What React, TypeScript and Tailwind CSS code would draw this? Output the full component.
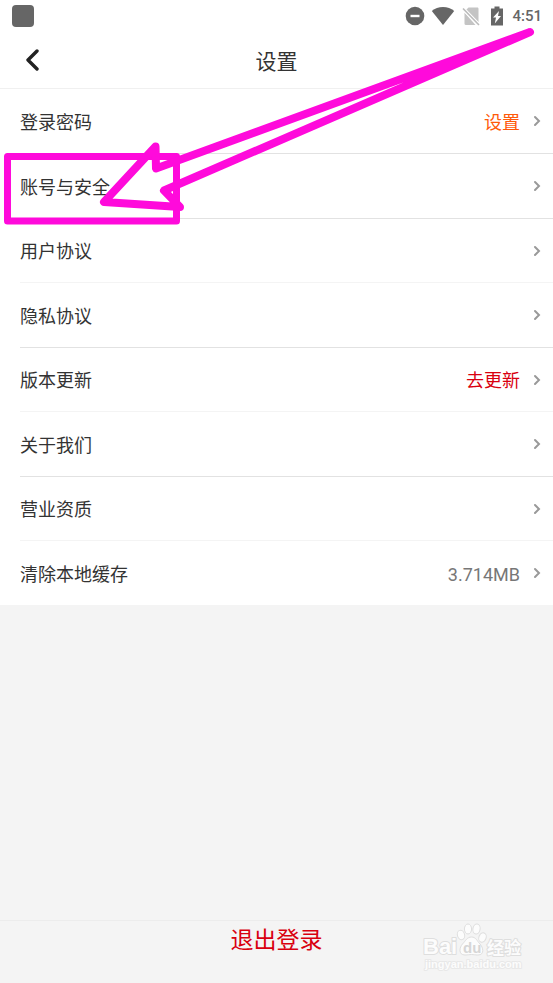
import type { ReactNode } from "react";

type Row = {
    label: string;
    value?: string;
    valueClass?: string;
    rowClass: string;
};

const TALL = "h-[65px] border-b border-[#e2e2e2]";
const SHORT = "h-16 border-b border-[#f4f4f4]";

const ROWS: Row[] = [
    { label: "登录密码", value: "设置", valueClass: "text-[#ff5a0a]", rowClass: TALL },
    { label: "账号与安全", rowClass: TALL },
    { label: "用户协议", rowClass: SHORT },
    { label: "隐私协议", rowClass: TALL },
    { label: "版本更新", value: "去更新", valueClass: "text-[#d9000f]", rowClass: SHORT },
    { label: "关于我们", rowClass: TALL },
    { label: "营业资质", rowClass: SHORT },
    { label: "清除本地缓存", value: "3.714MB", valueClass: "text-[#777777]", rowClass: "h-16" },
];

const StatusIcon = ({ children }: { children: ReactNode }) => (
    <svg viewBox="0 0 24 20" className="h-5 w-6" fill="#666666" aria-hidden="true">
        {children}
    </svg>
);

const StatusBar = () => {
    return (
        <div className="flex h-8 items-center justify-between pr-[11px] pl-3">
            <div className="h-[22px] w-[22px] rounded bg-[#666666]" />
            <div className="flex items-center gap-[3px]">
                <StatusIcon>
                    <circle cx="11" cy="10" r="9.3" />
                    <path d="M6.500 8.800h9v2.400h-9z" fill="#fff" />
                </StatusIcon>
                <StatusIcon>
                    <path d="M12 19 .8 5C3.900 2.400 7.700 1 12 1s8.100 1.400 11.200 4z" />
                </StatusIcon>
                <StatusIcon>
                    <path d="M10.500 1.500h8.800c.7 0 1.200.5 1.200 1.200v13.600L7.500 4.500z" fill="#c4c4c4" />
                    <path d="M6.500 6.500 17.500 19H7.700c-.7 0-1.200-.5-1.200-1.200z" fill="#c4c4c4" />
                    <path d="m5 2.500 16 16.500" stroke="#fff" strokeWidth="3.600" />
                    <path d="m5 2.500 16 16.500" stroke="#bbbbbb" strokeWidth="1.600" />
                </StatusIcon>
                <StatusIcon>
                    <path d="M9.500.5h5v2H18v17H6v-17h3.500z" />
                    <path d="M14 5 8 11.500h3L9.800 17.500 16 10h-3z" fill="#fff" />
                </StatusIcon>
                <span className="text-[15px] font-medium text-[#666666]">4:51</span>
            </div>
        </div>
    );
};

const Header = () => {
    return (
        <header className="grid h-[57px] grid-cols-[64px_1fr_64px] items-center border-b border-[#f0f0f0]">
            <button type="button" aria-label="返回" className="grid h-full place-items-center">
                <svg viewBox="0 0 14 22" className="h-[22px] w-[14px]" fill="none">
                    <path
                        d="M12 2 3 11l9 9"
                        stroke="#222222"
                        strokeWidth="3.4"
                        strokeLinecap="round"
                        strokeLinejoin="round"
                    />
                </svg>
            </button>
            <h1 className="pt-1.5 text-center text-[21px] text-[#333333]">设置</h1>
        </header>
    );
};

const Chevron = () => (
    <svg viewBox="0 0 8 12" className="h-3 w-2" fill="none" aria-hidden="true">
        <path d="m2 2 4 4-4 4" stroke="#999999" strokeWidth="2" strokeLinecap="round" />
    </svg>
);

const SettingRow = ({ label, value, valueClass, rowClass }: Row) => {
    return (
        <li className={`ml-5 ${rowClass}`}>
            <button type="button" className="flex h-full w-full items-center pr-3 text-left text-lg">
                <span className="pt-[3px] text-[#333333]">{label}</span>
                <span className={`mr-[13px] ml-auto pt-[3px] ${valueClass ?? ""}`}>{value}</span>
                <Chevron />
            </button>
        </li>
    );
};

const Watermark = () => (
    <svg
        viewBox="0 0 110 56"
        className="absolute right-[22px] bottom-1 h-14 w-[110px]"
        fill="#fcfcfc"
        stroke="#dedede"
        fontFamily="'Liberation Sans', 'Noto Sans CJK SC', sans-serif"
        fontWeight="bold"
    >
        <g paintOrder="stroke" strokeWidth="2" strokeLinejoin="round">
            <text x="2" y="31" fontSize="22">Bai</text>
            <text x="66" y="31" fontSize="17">经验</text>
            <text x="4" y="45" fontSize="11" stroke="#e8e8e8">jingyan.baidu.com</text>
        </g>
        <ellipse cx="40" cy="12" rx="3.600" ry="4.800" transform="rotate(-15 40 12)" />
        <ellipse cx="47" cy="6" rx="3.600" ry="5" />
        <ellipse cx="55.500" cy="6" rx="3.600" ry="5" transform="rotate(10 55.500 6)" />
        <ellipse cx="61.500" cy="14.500" rx="3.600" ry="4.800" transform="rotate(20 61.500 14.500)" />
        <path d="M50.500 14c4.500 0 5.500 4 8.500 7s5 11-2 11c-3 0-4-.5-6.500-.5S47 32 44 32c-7 0-5.500-8-2.500-11s4.500-7 9-7z" />
        <text x="42" y="30" fontSize="15" fill="#d6d6d6" stroke="none">du</text>
    </svg>
);

// hand-drawn box and arrow pointing at the account row
const Annotation = () => (
    <svg
        viewBox="0 0 553 240"
        className="pointer-events-none absolute top-0 left-0 h-[240px] w-[553px]"
        fill="none"
        stroke="#ff0adb"
        strokeLinecap="round"
        strokeLinejoin="round"
        aria-hidden="true"
    >
        <path d="M7.500 156.500h169v64.500H7.500z" strokeWidth="7" />
        <path d="M530 32 156 168.500 155.500 146.500 104 202 180 207 164 190.500z" strokeWidth="8" />
    </svg>
);

const App = () => {
    return (
        <div className="relative flex min-h-screen flex-col bg-[#f4f4f4] font-['Roboto','Noto_Sans_CJK_SC',sans-serif]">
            <div className="bg-white">
                <StatusBar />
                <Header />
                <ul>
                    {ROWS.map((row) => (
                        <SettingRow key={row.label} {...row} />
                    ))}
                </ul>
            </div>
            <footer className="relative mt-auto h-[63px] border-t border-[#ececec]">
                <button type="button" className="h-10 w-full text-[23px] text-[#d9000f]">
                    退出登录
                </button>
                <Watermark />
            </footer>
            <Annotation />
        </div>
    );
};

export default App;
